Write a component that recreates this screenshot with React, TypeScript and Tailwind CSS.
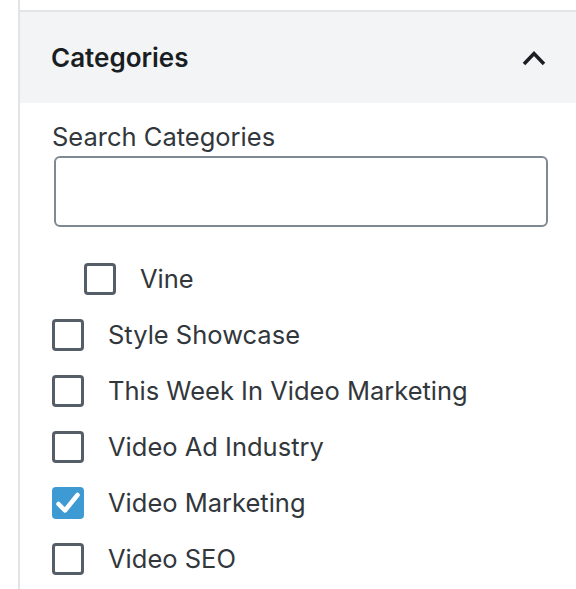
import { useState } from "react";

const items = [
  { name: "Vine", child: true, checked: false },
  { name: "Style Showcase", child: false, checked: false },
  { name: "This Week In Video Marketing", child: false, checked: false },
  { name: "Video Ad Industry", child: false, checked: false },
  { name: "Video Marketing", child: false, checked: true },
  { name: "Video SEO", child: false, checked: false },
];

function Box({ checked }: { checked: boolean }) {
  if (checked) {
    return (
      <span className="flex h-[32px] w-[32px] shrink-0 items-center justify-center rounded-[4px] bg-[#3d9ad2]">
        <svg width="26" height="24" viewBox="0 0 26 24" fill="none">
          <path d="M3.5 13 L10 19.5 L22.5 4" stroke="white" strokeWidth="4.5" strokeLinecap="round" strokeLinejoin="round" />
        </svg>
      </span>
    );
  }
  return <span className="h-[32px] w-[32px] shrink-0 rounded-[4px] border-[3px] border-[#555d66] bg-white" />;
}

export default function App() {
  const [open] = useState(true);

  return (
    <div className="flex h-[589px] w-[576px] overflow-hidden bg-white font-['Inter',sans-serif]">
      <div className="w-[18px] shrink-0" />
      <div className="flex-1 border-l-2 border-[#e2e4e7] pt-[10px]">
        <div className="border-t-2 border-[#e2e4e7]">
          <div className="flex h-[91px] items-center justify-between bg-[#f3f4f5] pl-[31px] pr-[30px]">
            <span className="text-[26px] font-semibold text-[#191e23]">Categories</span>
            <svg width="24" height="16" viewBox="0 0 24 16" fill="none" className={open ? "" : "rotate-180"}>
              <path d="M2 14 L12 3.5 L22 14" stroke="#191e23" strokeWidth="3.5" />
            </svg>
          </div>

          <div className="pl-[32px]">
            <div className="pt-[19px] text-[25.5px] leading-[30px] text-[#32373c]">Search Categories</div>
            <input
              type="text"
              className="mt-[4px] ml-[2px] block h-[71px] w-[494px] rounded-[6px] border-2 border-[#7e8993] bg-white"
            />
            <div className="pt-[24px]">
              {items.map((it) => (
                <div key={it.name} className={`flex h-[56px] items-center gap-[24px] ${it.child ? "pl-[32px]" : ""}`}>
                  <Box checked={it.checked} />
                  <span className="text-[25.5px] text-[#32373c]">{it.name}</span>
                </div>
              ))}
            </div>
          </div>
        </div>
      </div>
    </div>
  );
}
